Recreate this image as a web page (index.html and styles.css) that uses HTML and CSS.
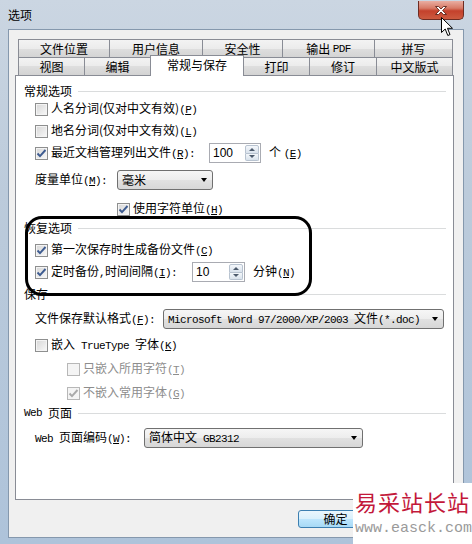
FILE: index.html
```html
<!DOCTYPE html>
<html lang="zh-CN">
<head>
    <meta charset="UTF-8">
    <title>选项</title>
    <link rel="stylesheet" href="styles.css">
</head>
<body>
<div class="window">
    <div class="titlebar">
        <span class="title">选项</span>
        <button class="close-btn" aria-label="关闭">
            <svg width="12" height="9" viewBox="0 0 12 9">
                <path d="M0.5 0.5 H3.6 L6 3 L8.4 0.5 H11.5 L7.6 4.5 L11.5 8.5 H8.4 L6 6 L3.6 8.5 H0.5 L4.4 4.5 Z" fill="#fff" stroke="#5b2318" stroke-width="0.9" stroke-linejoin="round"/>
            </svg>
        </button>
    </div>

    <div class="client">
        <div class="tabs">
            <div class="tab-row back">
                <div class="tab t-loc">文件位置</div>
                <div class="tab t-user">用户信息</div>
                <div class="tab t-sec">安全性</div>
                <div class="tab t-pdf">输出&nbsp;<span class="lat">PDF</span></div>
                <div class="tab t-spell">拼写</div>
            </div>
            <div class="tab-row front">
                <div class="tab t-view">视图</div>
                <div class="tab t-edit">编辑</div>
                <div class="tab t-save active">常规与保存</div>
                <div class="tab t-print">打印</div>
                <div class="tab t-rev">修订</div>
                <div class="tab t-cn">中文版式</div>
            </div>
        </div>

        <div class="panel">
            <!-- 常规选项 -->
            <div class="group-title">常规选项</div>
            <div class="row">
                <span class="box"></span>
                <span class="label">人名分词(仅对中文有效)<span class="key">(<u>P</u>)</span></span>
            </div>
            <div class="row">
                <span class="box"></span>
                <span class="label">地名分词(仅对中文有效)<span class="key">(<u>L</u>)</span></span>
            </div>
            <div class="row">
                <span class="box checked">
                    <svg width="11" height="11" viewBox="0 0 11 11"><polyline points="1.5,5.5 4,8.2 9.5,2" fill="none" stroke="#3d5b90" stroke-width="1.9"/></svg>
                </span>
                <span class="label lbl-recent">最近文档管理列出文件<span class="key">(<u>R</u>):</span></span>
                <span class="spin">
                    <span class="spin-val">100</span>
                    <span class="spin-btns"><span class="up"></span><span class="down"></span></span>
                </span>
                <span class="after-spin">个 <span class="key">(<u>E</u>)</span></span>
            </div>
            <div class="row field mt5">
                <span class="lbl-measure">度量单位<span class="key">(<u>M</u>):</span></span>
                <span class="combo w-measure"><span class="combo-text">毫米</span><span class="arrow"></span></span>
            </div>
            <div class="row unit mt7">
                <span class="box checked">
                    <svg width="11" height="11" viewBox="0 0 11 11"><polyline points="1.5,5.5 4,8.2 9.5,2" fill="none" stroke="#3d5b90" stroke-width="1.9"/></svg>
                </span>
                <span class="label">使用字符单位<span class="key">(<u>H</u>)</span></span>
            </div>

            <!-- 恢复选项 -->
            <div class="group-title mt1">恢复选项</div>
            <div class="row mt4">
                <span class="box checked">
                    <svg width="11" height="11" viewBox="0 0 11 11"><polyline points="1.5,5.5 4,8.2 9.5,2" fill="none" stroke="#3d5b90" stroke-width="1.9"/></svg>
                </span>
                <span class="label">第一次保存时生成备份文件<span class="key">(<u>C</u>)</span></span>
            </div>
            <div class="row">
                <span class="box checked">
                    <svg width="11" height="11" viewBox="0 0 11 11"><polyline points="1.5,5.5 4,8.2 9.5,2" fill="none" stroke="#3d5b90" stroke-width="1.9"/></svg>
                </span>
                <span class="label lbl-timer">定时备份<span class="key">,</span>时间间隔<span class="key">(<u>I</u>):</span></span>
                <span class="spin w-timer">
                    <span class="spin-val">10</span>
                    <span class="spin-btns"><span class="up"></span><span class="down"></span></span>
                </span>
                <span class="after-spin">分钟<span class="key">(<u>N</u>)</span></span>
            </div>

            <!-- 保存 -->
            <div class="group-title mt4">保存</div>
            <div class="row field mt7">
                <span class="lbl-format">文件保存默认格式<span class="key">(<u>F</u>):</span></span>
                <span class="combo w-format"><span class="combo-text"><span class="lat">Microsoft Word 97/2000/XP/2003 </span>文件<span class="lat">(*.doc)</span></span><span class="arrow"></span></span>
            </div>
            <div class="row mt4">
                <span class="box"></span>
                <span class="label">嵌入<span class="lat"> TrueType </span>字体<span class="key">(<u>K</u>)</span></span>
            </div>
            <div class="row sub mt2 disabled">
                <span class="box"></span>
                <span class="label">只嵌入所用字符<span class="key">(<u>T</u>)</span></span>
            </div>
            <div class="row sub mt2 disabled">
                <span class="box checked">
                    <svg width="11" height="11" viewBox="0 0 11 11"><polyline points="1.5,5.5 4,8.2 9.5,2" fill="none" stroke="#a9a9a9" stroke-width="1.9"/></svg>
                </span>
                <span class="label">不嵌入常用字体<span class="key">(<u>G</u>)</span></span>
            </div>

            <!-- Web 页面 -->
            <div class="group-title mt2"><span class="lat">Web&nbsp;</span>页面</div>
            <div class="row field mt7">
                <span class="lbl-web"><span class="lat">Web </span>页面编码<span class="key">(<u>W</u>):</span></span>
                <span class="combo w-web"><span class="combo-text">简体中文<span class="lat"> GB2312</span></span><span class="arrow"></span></span>
            </div>
        </div>

        <div class="buttons">
            <button class="btn default">确定</button>
        </div>
    </div>

    <!-- hand-drawn highlight around 恢复选项 -->
    <div class="callout"></div>

    <svg class="cursor" width="13" height="20" viewBox="0 0 13 20">
        <path d="M0.5 0.5 V15.5 L4.2 12 L6.8 18.5 L9 17.6 L6.5 11.3 H11.5 Z" fill="#fff" stroke="#000" stroke-width="1" stroke-linejoin="round"/>
    </svg>

    <div class="watermark">
        <div class="wm-cn">易采站长站</div>
        <div class="wm-url">www.easck.com</div>
    </div>
</div>
</body>
</html>
```

FILE: styles.css
```css
* {
    box-sizing: border-box;
}

body {
    margin: 0;
    width: 472px;
    height: 544px;
    overflow: hidden;
    font-family: "Noto Sans CJK SC", "Liberation Sans", sans-serif;
    font-size: 12px;
    line-height: 14px;
    color: #000;
    background: linear-gradient(to bottom, #cbd6e2 0%, #bccbdb 35%, #aec3da 100%);
}

.window {
    position: relative;
    width: 472px;
    height: 544px;
}

.lat,
.key {
    font-family: "Liberation Mono", monospace;
    font-size: 11px;
    letter-spacing: -0.6px;
    white-space: pre;
}

/* title bar */
.titlebar {
    display: flex;
    height: 29px;
    padding-left: 8px;
}

.title {
    align-self: center;
}

.close-btn {
    margin-left: auto;
    margin-right: 8px;
    margin-top: 1px;
    width: 46px;
    height: 19px;
    padding: 0;
    border: 1px solid #6e2c22;
    border-top: none;
    border-radius: 0 0 5px 5px;
    background: linear-gradient(#e9aea2, #d77a66 40%, #c4412c 55%, #cc5a3f);
    display: flex;
    align-items: center;
    justify-content: center;
}

/* dialog body */
.client {
    margin: 0 8px;
    height: 509px;
    border: 1px solid #8598ad;
    background: #f0f0f0;
    padding-top: 9px;
}

.tabs {
    margin-left: 9px;
}

.tab-row {
    display: flex;
    align-items: flex-end;
    height: 18px;
}

.tab {
    height: 18px;
    margin-left: -1px;
    border: 1px solid #898c95;
    border-bottom: none;
    background: linear-gradient(#f3f3f3, #ebebeb 50%, #dedede 50%, #d3d3d3);
    display: flex;
    align-items: center;
    justify-content: center;
}

.tab:first-child {
    margin-left: 0;
}

.back .tab {
    height: 19px;
    margin-bottom: -1px;
}

.tab.active {
    height: 21px;
    margin-bottom: -1px;
    background: #fff;
    position: relative;
    z-index: 2;
    padding-bottom: 2px;
}

.t-loc { width: 92px; }
.t-user { width: 94px; }
.t-sec { width: 81px; }
.t-pdf { width: 93px; }
.t-spell { width: 79px; }

.t-view { width: 67px; }
.t-edit { width: 67px; }
.t-save { width: 94px; }
.t-print { width: 67px; }
.t-rev { width: 68px; }
.t-cn { width: 77px; }

.panel {
    margin-left: 6px;
    width: 439px;
    height: 425px;
    border: 1px solid #898c95;
    background: #fff;
    padding-top: 8px;
}

.group-title {
    display: flex;
    align-items: center;
    height: 14px;
    padding: 0 7px 0 8px;
}

.group-title::after {
    content: "";
    flex: 1;
    height: 1px;
    margin-left: 6px;
    background: #dadcdd;
}

.row {
    display: flex;
    align-items: center;
    height: 22px;
    padding-left: 19px;
}

.row.sub {
    padding-left: 51px;
}

.row.unit {
    padding-left: 101px;
}

.mt1 { margin-top: 1px; }
.mt2 { margin-top: 2px; }
.mt4 { margin-top: 4px; }
.mt5 { margin-top: 5px; }
.mt7 { margin-top: 7px; }

/* checkbox */
.box {
    width: 13px;
    height: 13px;
    flex-shrink: 0;
    margin-right: 3px;
    border: 1px solid #8e8f8f;
    background: linear-gradient(135deg, #d6d6d6, #f9f9f9);
    box-shadow: inset 0 0 0 1px #f4f4f4;
    display: flex;
    align-items: center;
    justify-content: center;
}

.disabled {
    color: #8d8d8d;
}

.disabled .box {
    border-color: #b7b7b7;
    background: #f4f4f4;
    box-shadow: none;
}

.lbl-recent { width: 158px; }
.lbl-timer { width: 141px; }
.lbl-measure { width: 82px; }
.lbl-format { width: 128px; }
.lbl-web { width: 109px; }

/* spin box */
.spin {
    display: flex;
    width: 52px;
    height: 20px;
    padding: 1px 1px 1px 3px;
    border: 1px solid #a9abb2;
    background: #fff;
}

.spin.w-timer {
    width: 53px;
}

.spin-val {
    flex: 1;
    font-family: "Liberation Sans", sans-serif;
    line-height: 16px;
}

.spin-btns {
    display: flex;
    flex-direction: column;
    width: 14px;
}

.up,
.down {
    flex: 1;
    border: 1px solid #b8c3d0;
    background: linear-gradient(#f4f7fb, #d9e2ec);
    display: flex;
    align-items: center;
    justify-content: center;
}

.up {
    border-radius: 2px 2px 0 0;
}

.down {
    border-radius: 0 0 2px 2px;
    border-top: none;
}

.up::after {
    content: "";
    border-left: 3px solid transparent;
    border-right: 3px solid transparent;
    border-bottom: 3px solid #4c5a6c;
}

.down::after {
    content: "";
    border-left: 3px solid transparent;
    border-right: 3px solid transparent;
    border-top: 3px solid #4c5a6c;
}

.after-spin {
    margin-left: 8px;
}

/* drop-down */
.field {
    padding-left: 19px;
}

.combo {
    display: flex;
    align-items: center;
    height: 20px;
    padding: 0 4px 0 4px;
    border: 1px solid #707070;
    border-radius: 3px;
    background: linear-gradient(#f6f6f6, #ededed 50%, #e1e1e1 50%, #d7d7d7);
}

.combo-text {
    flex: 1;
    white-space: nowrap;
}

.arrow {
    width: 0;
    height: 0;
    margin-right: 1px;
    border-left: 3.5px solid transparent;
    border-right: 3.5px solid transparent;
    border-top: 4px solid #000;
}

.w-measure { width: 96px; }
.w-format { width: 281px; }
.w-web { width: 219px; }

/* bottom button */
.buttons {
    display: flex;
    margin-top: 10px;
    padding-left: 289px;
}

.btn {
    width: 75px;
    height: 18px;
    padding: 0;
    font-family: inherit;
    font-size: 12px;
    line-height: 14px;
    border: 1px solid #707070;
    border-radius: 3px;
    background: linear-gradient(#f2f2f2, #ebebeb 50%, #dddddd 50%, #cfcfcf);
}

.btn.default {
    border-color: #3c7fb1;
    background: linear-gradient(#eaf6fd, #d9f0fc 50%, #bee6fd 50%, #a7d9f5);
}

/* overlays */
.callout {
    position: absolute;
    left: 25px;
    top: 216px;
    width: 287px;
    height: 80px;
    border: 3px solid #000;
    border-radius: 17px;
}

.cursor {
    position: absolute;
    left: 441px;
    top: 17px;
}

.watermark {
    position: absolute;
    left: 353px;
    top: 483px;
    width: 119px;
    height: 61px;
    padding: 5px 0 0 2px;
    background: #fff;
}

.wm-cn {
    color: #c3183a;
    font-size: 22px;
    line-height: 26px;
    letter-spacing: 1px;
}

.wm-url {
    margin-top: 6px;
    font-family: "Liberation Mono", monospace;
    font-size: 15px;
    line-height: 18px;
    color: #9a9a9a;
}
```
